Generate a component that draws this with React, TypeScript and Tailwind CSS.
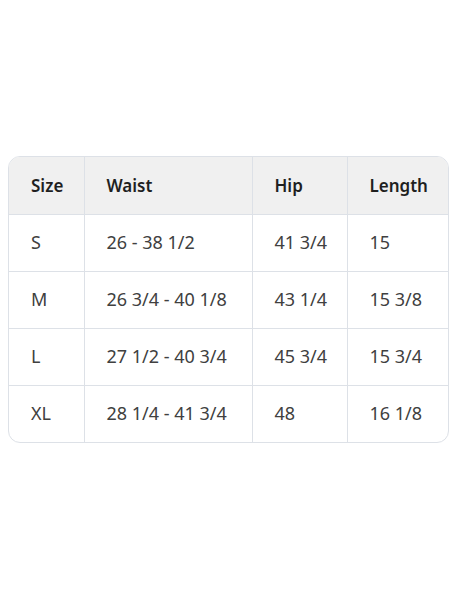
const rows = [
  ["S", "26 - 38 1/2", "41 3/4", "15"],
  ["M", "26 3/4 - 40 1/8", "43 1/4", "15 3/8"],
  ["L", "27 1/2 - 40 3/4", "45 3/4", "15 3/4"],
  ["XL", "28 1/4 - 41 3/4", "48", "16 1/8"],
];

export default function App() {
  return (
    <div
      className="flex h-[600px] w-full items-center bg-white px-2 pb-[1px]"
      style={{ fontFamily: '"Noto Sans", "Open Sans", sans-serif' }}
    >
      <div className="w-full overflow-hidden rounded-xl border border-[#dde1e7]">
        <table className="w-full table-fixed border-collapse">
          <colgroup>
            <col className="w-[75px]" />
            <col className="w-[168px]" />
            <col className="w-[95px]" />
            <col />
          </colgroup>
          <thead>
            <tr className="h-[57px] bg-[#f0f0f0]">
              {["Size", "Waist", "Hip", "Length"].map((h, i) => (
                <th
                  key={h}
                  className={`pl-[22px] text-left text-[17px] font-semibold text-[#1f1f1f] ${
                    i > 0 ? "border-l border-[#dde1e7]" : ""
                  }`}
                >
                  {h}
                </th>
              ))}
            </tr>
          </thead>
          <tbody>
            {rows.map((r) => (
              <tr key={r[0]} className="h-[57px] border-t border-[#dde1e7]">
                {r.map((c, i) => (
                  <td
                    key={i}
                    className={`pl-[22px] text-[18px] text-[#404040] ${
                      i > 0 ? "border-l border-[#dde1e7]" : ""
                    }`}
                  >
                    {c}
                  </td>
                ))}
              </tr>
            ))}
          </tbody>
        </table>
      </div>
    </div>
  );
}
